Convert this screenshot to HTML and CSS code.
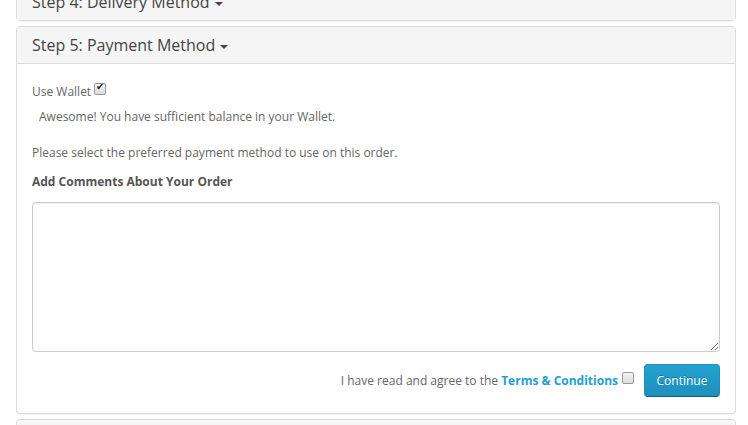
FILE: index.html
```html
<!DOCTYPE html>
<html lang="en">
<head>
    <meta charset="UTF-8">
    <title>Checkout</title>
    <link rel="stylesheet" href="styles.css">
</head>
<body>
    <div class="checkout">
        <!-- Previous step, scrolled mostly out of view -->
        <div class="panel">
            <div class="panel-heading">Step 4: Delivery Method <span class="caret"></span></div>
        </div>

        <div class="panel">
            <div class="panel-heading">Step 5: Payment Method <span class="caret"></span></div>
            <div class="panel-body">
                <div class="wallet">
                    <label for="useWallet">Use Wallet</label>
                    <input type="checkbox" id="useWallet" class="check" checked>
                </div>
                <p class="wallet-note">Awesome! You have sufficient balance in your Wallet.</p>
                <p class="hint">Please select the preferred payment method to use on this order.</p>
                <p class="comments-title"><strong>Add Comments About Your Order</strong></p>
                <textarea class="comments" rows="8"></textarea>
                <div class="buttons">
                    <span>I have read and agree to the <a href="#" class="terms">Terms &amp; Conditions</a></span>
                    <input type="checkbox" class="check" id="agree">
                    <button class="btn-primary">Continue</button>
                </div>
            </div>
        </div>

        <!-- Next step, starts below the fold -->
        <div class="panel">
            <div class="panel-heading">&nbsp;</div>
        </div>
    </div>
</body>
</html>
```

FILE: styles.css
```css
body {
    margin: 0;
    padding: 0 12px 0 16px;
    background: #fff;
    font-family: "Open Sans", Arial, sans-serif;
    font-size: 12px;
    color: #666;
}

.checkout {
    margin-top: -17px;
}

.panel {
    border: 1px solid #ddd;
    border-radius: 4px;
    margin-bottom: 5px;
    box-shadow: 0 1px 1px rgba(0, 0, 0, 0.05);
    background: #fff;
}

.panel-heading {
    background: #f5f5f5;
    color: #444;
    font-size: 16px;
    line-height: 22px;
    padding: 7px 15px;
    border-radius: 3px 3px 0 0;
}

.panel-body {
    border-top: 1px solid #ddd;
    padding: 18px 15px 16px;
}

.caret {
    display: inline-block;
    width: 0;
    height: 0;
    margin-left: 1px;
    vertical-align: middle;
    border-top: 4px solid #444;
    border-left: 4px solid transparent;
    border-right: 4px solid transparent;
}

p {
    margin: 0;
    line-height: 20px;
}

.wallet {
    display: flex;
    align-items: center;
    gap: 3px;
    line-height: 20px;
}

.wallet .check {
    margin-top: -6px;
}

.wallet-note {
    margin-top: 5px;
    padding-left: 7px;
}

.hint {
    margin-top: 16px;
}

.comments-title {
    margin-top: 9px;
    color: #555;
}

.comments {
    display: block;
    box-sizing: border-box;
    width: 100%;
    height: 150px;
    margin-top: 10px;
    border: 1px solid #ccc;
    border-radius: 4px;
    box-shadow: inset 0 1px 1px rgba(0, 0, 0, 0.075);
    resize: vertical;
}

/* Grey old-style checkbox */
.check {
    appearance: none;
    width: 12px;
    height: 12px;
    margin: 0;
    border: 1px solid #999;
    border-radius: 2px;
    background: linear-gradient(#f4f4f4, #dcdcdc);
    position: relative;
}

.check:checked::after {
    content: "\2714";
    position: absolute;
    left: 1px;
    top: -3px;
    font-size: 10px;
    color: #222;
}

.buttons {
    display: flex;
    justify-content: flex-end;
    align-items: center;
    margin-top: 12px;
    line-height: 20px;
}

.buttons .check {
    margin: -6px 0 0 4px;
}

.terms {
    color: #23a1d1;
    font-weight: bold;
    text-decoration: none;
}

.btn-primary {
    margin-left: 10px;
    height: 33px;
    width: 76px;
    padding: 0;
    font-family: inherit;
    font-size: 12px;
    color: #fff;
    background: linear-gradient(#23a1d1, #1f90bb);
    border: 1px solid #1f90bb;
    border-bottom-color: #145e7a;
    border-radius: 4px;
    text-shadow: 0 -1px 0 rgba(0, 0, 0, 0.25);
}
```
